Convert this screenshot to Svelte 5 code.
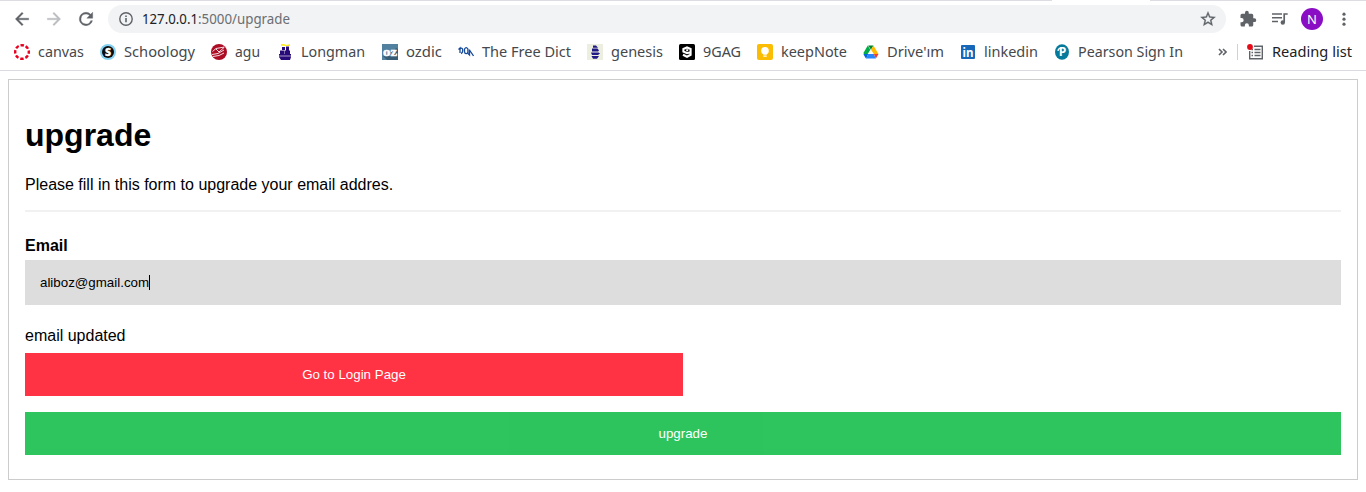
<script>
  const bookmarks = [
    { id: 'canvas', label: 'canvas', text: 46, slot: 86 },
    { id: 'schoology', label: 'Schoology', text: 71, slot: 111 },
    { id: 'agu', label: 'agu', text: 25, slot: 66 },
    { id: 'longman', label: 'Longman', text: 64, slot: 105 },
    { id: 'ozdic', label: 'ozdic', text: 36, slot: 76 },
    { id: 'dict', label: 'The Free Dict', text: 89, slot: 129 },
    { id: 'genesis', label: 'genesis', text: 52, slot: 92 },
    { id: 'gag', label: '9GAG', text: 38, slot: 78 },
    { id: 'keep', label: 'keepNote', text: 66, slot: 106 },
    { id: 'drive', label: "Drive'ım", text: 57, slot: 97 },
    { id: 'linkedin', label: 'linkedin', text: 54, slot: 94 },
    { id: 'pearson', label: 'Pearson Sign In', text: 105, slot: 164 }
  ];
</script>

{#snippet fitted(label, width, size)}
  <svg class="label" {width} height="24"><text x="0" y="17" font-size={size} textLength={width} lengthAdjust="spacingAndGlyphs">{label}</text></svg>
{/snippet}

{#snippet favicon(id)}
  <svg class="fav" width="16" height="16" viewBox="0 0 16 16">
    {#if id === 'canvas'}
      <circle cx="8" cy="8" r="6.8" fill="none" stroke="#e9001f" stroke-width="2.4" stroke-dasharray="3.5 1.84" stroke-dashoffset="1.75" />
    {:else if id === 'schoology'}
      <circle cx="8" cy="8" r="8" fill="#83d0f2" />
      <circle cx="8" cy="8" r="6" fill="#0b0b0b" />
      <text x="8" y="11.8" font-family="Open Sans, sans-serif" font-size="10.5" font-weight="800" fill="#fff" stroke="#fff" stroke-width=".3" text-anchor="middle">S</text>
    {:else if id === 'agu'}
      <circle cx="8" cy="8" r="8" fill="#ad0c25" />
      <path d="M1.5 7.5 5 4.5 13.5 3M5 5l3 3 5-4.5M1 10.5l6-1 6-3.5M2 12.5l6-1 5-2.5" fill="none" stroke="#fff" stroke-width="1" opacity=".85" />
    {:else if id === 'longman'}
      <path d="M5 3h3v3H5zM9 2.5h3v4H9zM3 6.5h4.6V11H3zM8 6.5h5V11H8zM2 10h12v3l-1 3H4l-2-3Z" fill="#270b78" />
      <path d="M4 0h3l2 1 4-1v2H9L6 1.8 4 2Z" fill="#ffed20" />
      <path d="M2 12h12" stroke="#fff" stroke-width=".6" />
    {:else if id === 'ozdic'}
      <path fill="#52809f" d="M0 0h16v16H0z" />
      <path fill="#385c74" d="m1 12 4 4h11V5l-2-1-5 8Z" />
      <text x="8" y="12" font-family="Liberation Serif, serif" font-size="12.5" font-weight="700" fill="#fff" stroke="#fff" stroke-width=".5" text-anchor="middle" textLength="14" lengthAdjust="spacingAndGlyphs">oz</text>
    {:else if id === 'dict'}
      <path d="M.5 5.5 2 4v5M2 5q2.5-2 2.7 1T3 9.5M6.5 8.5V5q1.7-2.8 3.4 0v3.5q-1.7 2.2-3.4 0M10 9.5l1.5 1.5V5.5M11.5 6l4 6" fill="none" stroke="#174a99" stroke-width="1.3" />
    {:else if id === 'genesis'}
      <path fill="#ecefdf" d="M0 0h16v16H0z" />
      <path d="M6 1.5h3l2 2.2H6ZM5 4.6h5.5l1.5 2-1 .8H5ZM4 8.4h7.5l1.5 1.2-2 1.3H5ZM4.5 12H12l-2 2.8H6Z" fill="#211a86" />
    {:else if id === 'gag'}
      <rect width="16" height="16" rx="1.5" fill="#000" />
      <path d="M11.6 8.2 8 9.2 4.4 7.5V5L8 3.5 11.6 5v5.8L8 12.7l-4-2M7.2 6.3h2" fill="none" stroke="#fff" stroke-width="2.1" />
    {:else if id === 'keep'}
      <rect width="16" height="16" rx="2" fill="#fbbc04" />
      <circle cx="8" cy="6.8" r="3.8" fill="#fff" />
      <path d="M6.1 9h3.8v1.5H6.1zM6.3 11.4h3.4v1.3H6.3z" fill="#fff" />
    {:else if id === 'drive'}
      <path d="M5.4 1.5 1 9.1 3.3 13 8 5.8Z" fill="#00ac47" transform="translate(-.6)" />
      <path d="M5.2 1.5h5.2L8 5.8Z" fill="#00832d" />
      <path d="M10.4 1.5 15.5 10h-4.7L8 5.8Z" fill="#ffba00" />
      <path d="M.4 10h4.8l-2 4.5Q2.6 14 2 13Z" fill="#0066da" />
      <path d="M5.2 10h5.6l2 4.5H3Z" fill="#2684fc" />
      <path d="M10.8 10h4.7l-2 3.5-.7 1Z" fill="#ea4335" />
    {:else if id === 'linkedin'}
      <rect x="1" y="1" width="14" height="14" rx="1" fill="#1767b8" />
      <text x="8" y="12.7" font-family="Open Sans, sans-serif" font-size="13" font-weight="700" fill="#fff" text-anchor="middle" textLength="11" lengthAdjust="spacingAndGlyphs">in</text>
    {:else}
      <ellipse cx="8" cy="8" rx="7" ry="7.7" fill="#047a9c" />
      <text x="8.6" y="12.4" font-family="Open Sans, sans-serif" font-size="12" font-weight="700" fill="#fff" text-anchor="middle">P</text>
      <path d="M4 7Q4.2 4 8 4" stroke="#fff" stroke-width="1.3" fill="none" />
    {/if}
  </svg>
{/snippet}

<div class="browser">
  <div class="tabline"><i></i><b></b></div>
  <div class="toolbar">
    <svg class="back" width="20" height="20" viewBox="0 0 24 24"><path fill="#5f6368" stroke="#5f6368" stroke-width=".4" d="M20 11H7.83l5.59-5.59L12 4l-8 8 8 8 1.41-1.41L7.83 13H20v-2z" /></svg>
    <svg class="forward" width="20" height="20" viewBox="0 0 24 24"><path fill="#bbbdc0" stroke="#bbbdc0" stroke-width=".4" d="m12 4-1.41 1.41L16.17 11H4v2h12.17l-5.58 5.59L12 20l8-8z" /></svg>
    <svg class="reload" width="20" height="20" viewBox="0 0 24 24"><path fill="#5f6368" stroke="#5f6368" stroke-width=".5" d="M17.65 6.35A7.96 7.96 0 0 0 12 4a8 8 0 1 0 7.73 10h-2.08A6 6 0 1 1 12 6c1.66 0 3.14.69 4.22 1.78L13 11h7V4l-2.35 2.35z" /></svg>
    <div class="address">
      <svg width="16" height="16" viewBox="0 0 16 16"><circle cx="8" cy="8" r="6.2" fill="none" stroke="#5f6368" stroke-width="1.4" /><path d="M7.2 7h1.6v4.3H7.2zM7.2 4.5h1.6V6H7.2z" fill="#5f6368" /></svg>
      <div class="url"><span class="host">{@render fitted('127.0.0.1', 56, 14)}</span>{@render fitted(':5000/upgrade', 92, 14)}</div>
      <svg class="star" width="18" height="18" viewBox="0 0 24 24"><path fill="#5f6368" stroke="#5f6368" stroke-width=".4" d="m22 9.24-7.19-.62L12 2 9.19 8.63 2 9.24l5.46 4.73L5.82 21 12 17.27 18.18 21l-1.63-7.03L22 9.24zM12 15.4l-3.76 2.27 1-4.28-3.32-2.88 4.38-.38L12 6.1l1.71 4.04 4.38.38-3.32 2.88 1 4.28L12 15.4z" /></svg>
    </div>
    <svg class="puzzle" width="18" height="18" viewBox="0 0 24 24"><path fill="#5f6368" d="M20.5 11H19V7a2 2 0 0 0-2-2h-4V3.5a2.5 2.5 0 0 0-5 0V5H4a2 2 0 0 0-2 2v3.8h1.5a2.7 2.7 0 0 1 0 5.4H2V20c0 1.1.9 2 2 2h3.8v-1.5a2.7 2.7 0 0 1 5.4 0V22H17a2 2 0 0 0 2-2v-4h1.5a2.5 2.5 0 0 0 0-5z" /></svg>
    <svg class="music" width="18" height="16" viewBox="0 0 18 16"><path d="M1 3h10M1 6.7h10M1 10.5h6" stroke="#5f6368" stroke-width="1.5" /><path d="M13.2 11.5V3h3.5" fill="none" stroke="#5f6368" stroke-width="1.7" /><circle cx="11.8" cy="11.5" r="2.2" fill="#5f6368" /></svg>
    <div class="avatar">N</div>
    <svg class="menu" width="4" height="16" viewBox="0 0 4 16" fill="#5f6368"><circle cx="2" cy="3.2" r="1.6" /><circle cx="2" cy="8.2" r="1.6" /><circle cx="2" cy="13.2" r="1.6" /></svg>
  </div>
  <div class="bookmarks">
    {#each bookmarks as item}
      <div class="bookmark" style="width: {item.slot}px">
        {@render favicon(item.id)}
        {@render fitted(item.label, item.text, 14.5)}
      </div>
    {/each}
    <svg class="more" width="9" height="8" viewBox="0 0 9 8"><path d="m1 1 3 3-3 3m4-6 3 3-3 3" fill="none" stroke="#5f6368" stroke-width="1.6" /></svg>
    <span class="divider"></span>
    <svg class="list" width="17" height="17" viewBox="0 0 17 17"><path d="M7 2.2h8.3v12.6H2.7V7" fill="none" stroke="#5f6368" stroke-width="1.4" /><path d="M7.5 5.5h6M7.5 8.5h6M7.5 11.5h6M4.5 5.5H6M4.5 8.5H6M4.5 11.5H6" stroke="#5f6368" stroke-width="1.4" /><circle cx="3" cy="3" r="2.9" fill="#e50b18" /></svg>
    <span class="reading">{@render fitted('Reading list', 80, 14.5)}</span>
  </div>
</div>

<main>
  <h1>upgrade</h1>
  <p>Please fill in this form to upgrade your email addres.</p>
  <hr />
  <div class="field-name">Email</div>
  <div class="field" role="textbox" tabindex="-1"><span>aliboz@gmail.com</span><i></i></div>
  <div class="status">email updated</div>
  <button class="login">Go to Login Page</button>
  <button class="submit">upgrade</button>
</main>

<style>
  :global(body) { margin: 0; background: #fff; overflow: hidden; }
  svg { display: block; flex: none; }
  .browser { box-sizing: border-box; height: 71px; border-bottom: 1px solid #dadae0; font-family: "Noto Sans", sans-serif; color: #45484c; }
  .tabline { display: flex; justify-content: space-between; height: 1px; }
  .tabline i { width: 1052px; background: #dddce3; }
  .tabline b { width: 216px; background: #dddce3; }
  .toolbar { display: flex; align-items: center; height: 36px; padding-left: 12px; }
  .forward { margin-left: 12px; }
  .reload { margin-left: 12px; }
  .address { display: flex; align-items: center; box-sizing: border-box; width: 1118px; height: 28px; margin-left: 12px; padding: 0 9px 0 10px; border-radius: 14px; background: #f1f3f4; }
  .url { display: flex; margin-left: 8px; color: #6b6e72; }
  .host { color: #202124; }
  .star { margin-left: auto; }
  .label { overflow: visible; fill: currentColor; }
  .puzzle { margin-left: 13px; }
  .music { margin-left: 14px; }
  .avatar { width: 22px; height: 22px; margin-left: 12px; border-radius: 50%; background: #8a0fc4; color: #fff; font-size: 13px; line-height: 22px; text-align: center; }
  .menu { margin-left: 19px; }
  .bookmarks { display: flex; align-items: center; height: 30px; padding-left: 14px; }
  .bookmark { display: flex; align-items: center; gap: 8px; flex: none; }
  .divider { width: 1px; height: 16px; margin: 0 9px 0 10px; background: #cfd1d4; }
  .reading { margin-left: 8px; color: #202124; }
  main { box-sizing: border-box; height: 401px; margin: 8px; padding: 16px; border: 1px solid #ccc; font: 16px "Liberation Sans", Arial, sans-serif; color: #000; }
  h1 { margin: 21px 0 23px; font-size: 32px; line-height: 36px; }
  p { margin: 0 0 16px; line-height: 18px; }
  hr { margin: 0 0 25px; border: 1px solid #f1f1f1; }
  .field-name { line-height: 18px; font-weight: 700; }
  .field { display: flex; align-items: center; height: 45px; box-sizing: border-box; margin: 5px 0 22px; padding-left: 15px; background: #ddd; font-size: 13.333px; }
  .field i { width: 1px; height: 15px; background: #000; }
  .status { line-height: 18px; }
  button { display: block; width: 100%; height: 43px; margin: 8px 0; padding: 0; border: 0; color: #fff; font: 13.333px "Liberation Sans", Arial, sans-serif; opacity: .9; }
  .login { width: 50%; margin-bottom: 16px; background: #ff1d2f; }
  .submit { background: #17be4c; }
</style>
